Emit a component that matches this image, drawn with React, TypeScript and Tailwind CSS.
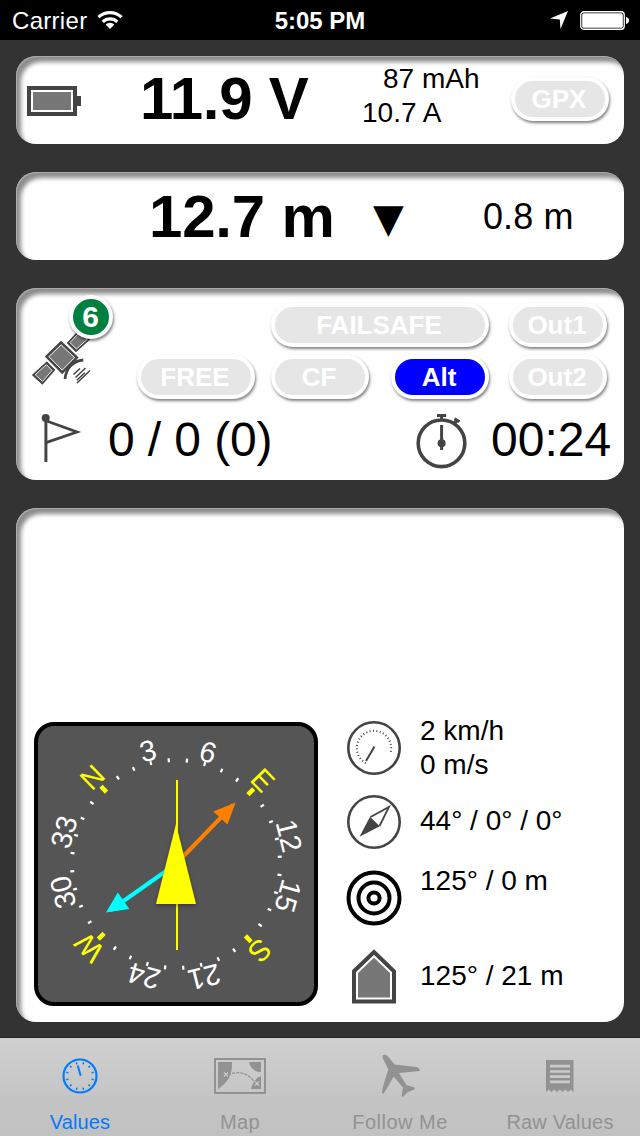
import type { ReactNode } from "react";

const DARK = "#444444";
const MID = "#777777";

function Card({ className, children }: { className: string; children?: ReactNode }) {
  return (
    <section
      className={`w-[608px] shrink-0 rounded-[20px] bg-white shadow-[inset_1px_1px_0_rgba(255,255,255,0.25),inset_5px_6px_4px_rgba(0,0,0,0.45)] ${className}`}
    >
      {children}
    </section>
  );
}

function Pill({ label, width, active = false }: { label: string; width: string; active?: boolean }) {
  return (
    <div
      className={`flex h-11 shrink-0 items-center justify-center rounded-full border-4 border-white pr-[2px] text-[26px] leading-none font-bold text-white shadow-[1px_2px_3px_rgba(0,0,0,0.5)] ${
        active ? "bg-[#0000ff]" : "bg-[#e6e6e6]"
      } ${width}`}
    >
      {label}
    </div>
  );
}

function StatusBar() {
  return (
    <header className="flex h-10 items-center justify-between bg-black text-2xl leading-none text-white">
      <div className="flex w-[240px] items-center gap-[10px] pl-3">
        <span className="pt-px tracking-[0.3px]">Carrier</span>
        <svg width="26" height="20" viewBox="0 0 26 20" fill="none" stroke="white" strokeWidth="3.2">
          <path d="M1.5 7.2a16.5 16.5 0 0 1 23 0" />
          <path d="M5.8 11.8a10.3 10.3 0 0 1 14.4 0" />
          <path d="M8.6 14.6a6.3 6.3 0 0 1 8.8 0L13 19z" fill="white" stroke="none" />
        </svg>
      </div>
      <span className="pt-px font-bold">5:05 PM</span>
      <div className="flex w-[240px] items-center justify-end gap-3 pr-[11px]">
        <svg width="18" height="18" viewBox="0 0 18 18">
          <path d="M18 0 10.5 18 9.8 8.6 0 7.6z" fill="white" />
        </svg>
        <svg width="49" height="19" viewBox="0 0 49 19">
          <rect x="0.75" y="0.75" width="43.5" height="17.5" rx="3" fill="none" stroke="white" strokeWidth="1.3" />
          <rect x="2.2" y="2.2" width="40.6" height="14.6" rx="1.5" fill="white" />
          <path d="M46 6c2 .3 3 1.8 3 3.5S48 12.7 46 13z" fill="white" />
        </svg>
      </div>
    </header>
  );
}

function BatteryIcon() {
  return (
    <svg width="54" height="30" viewBox="0 0 54 30" className="shrink-0">
      <rect x="2" y="2" width="46" height="26" fill="white" stroke={DARK} strokeWidth="4" />
      <rect x="6" y="6" width="38" height="18" fill={MID} />
      <rect x="50" y="10" width="4" height="10" fill={DARK} />
    </svg>
  );
}

function SatelliteIcon() {
  const parts = [
    "61,342.5 77,357.5 62.2,372.5 46.5,356.5",
    "46.9,363 53.7,370 42.3,383 33.6,375",
    "68.3,343 80,330.5 89,339 76,350.7",
  ];
  return (
    <svg width="64" height="60" viewBox="30 328 64 60">
      {parts.map((p) => (
        <g key={p}>
          <polygon points={p} fill={MID} stroke={DARK} strokeWidth="2.4" />
          <polygon
            points={p}
            fill={MID}
            stroke="white"
            strokeWidth="1"
            className="origin-center scale-[0.84] [transform-box:fill-box]"
          />
        </g>
      ))}
      <path d="M65 379C66 369 72 361 83.3 360" fill="none" stroke={DARK} strokeWidth="2.8" />
      <path
        d="M73.5 374.5l6.500-6M75.500 377.5l10-9.5M76.8 380.3l8-7.5M77 383l13-12.5"
        stroke={DARK}
        strokeWidth="1.5"
      />
    </svg>
  );
}

function FlagIcon() {
  return (
    <svg width="44" height="50" viewBox="40 413 44 50">
      <circle cx="45.7" cy="418" r="4" fill={DARK} />
      <path d="M45.9 418v44" stroke={DARK} strokeWidth="3" />
      <path d="M46 420.8 77 432 46 442.600" fill="none" stroke={DARK} strokeWidth="2.8" />
    </svg>
  );
}

function StopwatchIcon() {
  return (
    <svg width="52" height="56" viewBox="416 413 52 56">
      <circle cx="441.5" cy="443.3" r="23.3" fill="none" stroke={DARK} strokeWidth="3.6" />
      <path d="M437 415.5h9.2" stroke={DARK} strokeWidth="3" />
      <path d="M441.6 415v5M441.6 425v25" stroke={DARK} strokeWidth="3" />
      <circle cx="441.6" cy="443.3" r="4" fill={DARK} />
      <path d="M454.3 424l2.5-4" stroke={DARK} strokeWidth="3.5" />
      <path d="M454.5 418.7l5 3" stroke={DARK} strokeWidth="3" />
    </svg>
  );
}

const TICKS = Array.from({ length: 36 }, (_, i) => i * 10);
const MARKS: [number, string][] = [
  [0, "N"], [30, "3"], [60, "6"], [90, "E"], [120, "12"], [150, "15"],
  [180, "S"], [210, "21"], [240, "24"], [270, "W"], [300, "30"], [330, "33"],
];

function CompassRose() {
  return (
    <svg width="276" height="276" viewBox="38 726 276 276">
      <g transform="rotate(-44 176 864)">
        {TICKS.map((a) =>
          a % 90 === 0 ? (
            <path key={a} d="M176 756v8" transform={`rotate(${a} 176 864)`} stroke="#ffff00" strokeWidth="4.5" />
          ) : (
            <path key={a} d="M176 758v4" transform={`rotate(${a} 176 864)`} stroke="white" strokeWidth="2.2" />
          ),
        )}
        {MARKS.map(([a, t]) => (
          <text
            key={t}
            x="176"
            y={a % 90 === 0 ? 753.5 : 757.5}
            transform={`rotate(${a} 176 864)`}
            textAnchor="middle"
            fontSize="29"
            fill={a % 90 === 0 ? "#ffff00" : "white"}
          >
            {t}
          </text>
        ))}
      </g>
      <g fill="#00ffff" stroke="none">
        <path d="M176 864 110 910.5" stroke="#00ffff" strokeWidth="4" />
        <path d="M106 912.5 117.8 892.5 129.3 909z" />
      </g>
      <path d="M176 864 233 805" stroke="#ff8000" strokeWidth="4" />
      <path d="M235.5 802.5 213.3 811.5 227.5 824.5z" fill="#ff8000" />
      <path d="M177 780V950" stroke="#ffff00" strokeWidth="2" />
      <path d="M176 824 196 904H156z" fill="#ffff00" className="drop-shadow-[0_2px_2px_rgba(0,0,0,0.35)]" />
    </svg>
  );
}

function SpeedIcon() {
  const dots = Array.from({ length: 23 }, (_, i) => -150 + i * 11.4);
  return (
    <svg width="54" height="54" viewBox="-27 -27 54 54">
      <circle r="25.7" fill="none" stroke={DARK} strokeWidth="2.6" />
      {dots.map((a) => (
        <path key={a} d="M0-18.2v2" transform={`rotate(${a})`} stroke={DARK} strokeWidth="1" />
      ))}
      <path d="M.5-1.5-8 13" stroke={DARK} strokeWidth="2" />
    </svg>
  );
}

function HeadingIcon() {
  return (
    <svg width="54" height="54" viewBox="-27 -27 54 54">
      <circle r="25.7" fill="none" stroke={DARK} strokeWidth="2.6" />
      <path d="M-14.5 14.8-4-5.2 5.8 4.3z" fill={DARK} />
      <path d="M-3.5-5 15-15 5.5 4" fill="none" stroke={DARK} strokeWidth="1.8" />
    </svg>
  );
}

function TargetIcon() {
  return (
    <svg width="56" height="56" viewBox="-28 -28 56 56" fill="none" stroke="black" strokeWidth="4">
      <circle r="25.5" />
      <circle r="15.5" />
      <circle r="5.6" />
    </svg>
  );
}

function HomeIcon() {
  return (
    <svg width="44" height="55" viewBox="0 0 44 55">
      <path d="M2 22.3 22 3l20 19.3V52.5H2z" fill="white" stroke={DARK} strokeWidth="4" />
      <path d="M6 24 22 8.7 38 24V48.5H6z" fill={MID} />
    </svg>
  );
}

function Reading({ icon, children, height, text }: { icon: ReactNode; children: ReactNode; height: string; text: string }) {
  return (
    <div className={`flex shrink-0 items-center ${height}`}>
      <div className="flex w-[56px] shrink-0 justify-center">{icon}</div>
      <div className={`pl-[18px] text-[28px] leading-[34px] whitespace-nowrap ${text}`}>{children}</div>
    </div>
  );
}

function ClockTab() {
  const ticks = Array.from({ length: 12 }, (_, i) => i * 30 + 15);
  return (
    <svg width="36" height="36" viewBox="-18 -18 36 36" fill="none" stroke="currentColor">
      <circle r="16.5" strokeWidth="2.2" />
      {ticks.map((a) => (
        <path key={a} d="M0-14.2v2.2" transform={`rotate(${a})`} strokeWidth="1.5" />
      ))}
      <path d="M-2.3-10.5.7-.3" strokeWidth="2" />
    </svg>
  );
}

function MapTab() {
  return (
    <svg width="52" height="36" viewBox="0 0 52 36" fill="currentColor">
      <rect x="1" y="1" width="50" height="34" fill="none" stroke="currentColor" strokeWidth="2" />
      <path d="M4 4h14c.5 12-3.5 20-14 27zM35 4h12v10c-6 0-11-4-12-10zM47 18v13H37c2-7 5-11 10-13z" />
      <path d="M14 16.500C24 13 34 14 41 25" fill="none" stroke="currentColor" strokeWidth="1.3" strokeDasharray="3 1.2" />
      <path d="M10 14.500l4 4m0-4l-4 4M41 23.500l4 4m0-4l-4 4" stroke="#cacaca" strokeWidth="1.3" />
    </svg>
  );
}

function PlaneTab() {
  return (
    <svg width="40" height="44" viewBox="380 1056 40 44" fill="currentColor">
      <path d="M382.7 1057.5C383.5 1056.5 386 1056.5 388 1058.5L394.5 1066.5 416.5 1069C419 1070 420 1071.5 419.8 1073L399 1075 406.5 1087.2 413 1089C414.5 1089.5 415 1090.5 414.5 1091.5L407.8 1094C406 1095 404 1098.5 402.5 1099L401.7 1098 403 1089.5 393.5 1078.5C391 1084 386.5 1091 383.5 1095.5L382 1095.2C382 1092 383.5 1086.5 388.3 1071.5L383.5 1061.5C382.8 1060 382.2 1058.5 382.7 1057.5Z" />
    </svg>
  );
}

function ReceiptTab() {
  return (
    <svg width="28" height="32" viewBox="0 0 28 32">
      <path d="M0 0h27.5v32l-2.7-2.5L22 32l-2.7-2.5L16.5 32l-2.7-2.5L11 32l-2.7-2.5L5.5 32l-2.7-2.5L0 32z" fill="currentColor" />
      <path d="M4 6.2h20M4 11.5h20M4 16.7h20M4 21.9h20" stroke="#cbcbcb" strokeWidth="2.7" />
    </svg>
  );
}

function Tab({ label, icon, spacing = "", active = false }: { label: string; icon: ReactNode; spacing?: string; active?: boolean }) {
  return (
    <div className={`flex flex-1 flex-col items-center ${active ? "text-[#007aff]" : "text-[#929292]"}`}>
      <div className="mt-4 flex h-11 items-center">{icon}</div>
      <span className={`mt-[13px] text-xl leading-[22px] ${spacing}`}>{label}</span>
    </div>
  );
}

export default function App() {
  return (
    <div className="flex h-[1136px] w-[640px] flex-col overflow-hidden bg-[#333333] font-['Liberation_Sans',Arial,sans-serif] text-black">
      <StatusBar />
      <main className="flex h-[998px] flex-col items-center gap-7 pt-4">
        <Card className="flex h-[88px] items-start pl-[11px]">
          <div className="mt-[30px]">
            <BatteryIcon />
          </div>
          <div className="mt-[13px] ml-[59px] w-[200px] text-[60px] leading-[60px] font-bold tracking-[-0.3px] whitespace-nowrap">
            11.9 V
          </div>
          <div className="mt-[6px] ml-[22px] w-[149px] text-[28px] leading-[34px] whitespace-nowrap">
            <div className="pl-[21px]">87 mAh</div>
            <div>10.7 A</div>
          </div>
          <div className="mt-[21px]">
            <Pill label="GPX" width="w-[98px]" />
          </div>
        </Card>

        <Card className="flex h-[88px] items-start pl-[133px]">
          <div className="mt-[15px] w-[224px] text-[60px] leading-[60px] font-bold tracking-[-0.2px] whitespace-nowrap">
            12.7 m
          </div>
          <div className="mt-[26px] w-[110px] font-['DejaVu_Sans',sans-serif] text-[40px] leading-10">▼</div>
          <div className="mt-[25px] text-[36px] leading-10 tracking-[0.1px]">0.8 m</div>
        </Card>

        <Card className="flex h-[192px] flex-col">
          <div className="flex pt-[15px] pl-[14px]">
            <div className="relative h-[96px] w-[107px] pt-[25px]">
              <SatelliteIcon />
              <div className="absolute top-[-8px] left-[39px] flex size-11 items-center justify-center rounded-full border-4 border-white bg-[#008040] pr-px text-[30px] leading-none font-bold text-white shadow-[1px_2px_3px_rgba(0,0,0,0.5)]">
                6
              </div>
            </div>
            <div className="flex w-[470px] flex-col items-end gap-2">
              <div className="flex gap-5">
                <Pill label="FAILSAFE" width="w-[218px]" />
                <Pill label="Out1" width="w-[98px]" />
              </div>
              <div className="flex">
                <Pill label="FREE" width="w-[118px]" />
                <div className="ml-4 flex">
                  <Pill label="CF" width="w-[98px]" />
                </div>
                <div className="ml-[22px] flex">
                  <Pill label="Alt" width="w-[98px]" active />
                </div>
                <div className="ml-5 flex">
                  <Pill label="Out2" width="w-[98px]" />
                </div>
              </div>
            </div>
          </div>
          <div className="mt-[14px] flex items-start pl-6">
            <FlagIcon />
            <div className="w-[309px] pl-6 text-[48px] leading-[54px] tracking-[-0.1px] whitespace-nowrap">0 / 0 (0)</div>
            <div className="ml-[23px]">
              <StopwatchIcon />
            </div>
            <div className="ml-[23px] text-[48px] leading-[54px]">00:24</div>
          </div>
        </Card>

        <Card className="flex h-[514px] items-end pb-[7px] pl-[18px]">
          <div className="mb-[9px] size-[284px] shrink-0 rounded-[20px] border-4 border-black bg-[#555555]">
            <CompassRose />
          </div>
          <div className="ml-7 flex h-[304px] flex-col">
            <Reading icon={<SpeedIcon />} height="h-[74px]" text="">
              <div>2 km/h</div>
              <div>0 m/s</div>
            </Reading>
            <Reading icon={<HeadingIcon />} height="h-[74px]" text="pb-[3px]">
              44° / 0° / 0°
            </Reading>
            <Reading icon={<TargetIcon />} height="h-[78px]" text="pb-[35px]">
              125° / 0 m
            </Reading>
            <Reading icon={<HomeIcon />} height="h-[78px]" text="">
              125° / 21 m
            </Reading>
          </div>
        </Card>
      </main>
      <nav className="flex h-[98px] shrink-0 bg-linear-to-b from-[#d0d0d0] via-[#c5c5c5] via-60% to-[#c1c1c1] shadow-[0_-1px_0_#222222]">
        <Tab label="Values" icon={<ClockTab />} spacing="tracking-[0.1px]" active />
        <Tab label="Map" icon={<MapTab />} spacing="tracking-[0.4px]" />
        <Tab label="Follow Me" icon={<PlaneTab />} spacing="tracking-[0.5px]" />
        <Tab label="Raw Values" icon={<ReceiptTab />} spacing="tracking-[0.2px]" />
      </nav>
    </div>
  );
}
